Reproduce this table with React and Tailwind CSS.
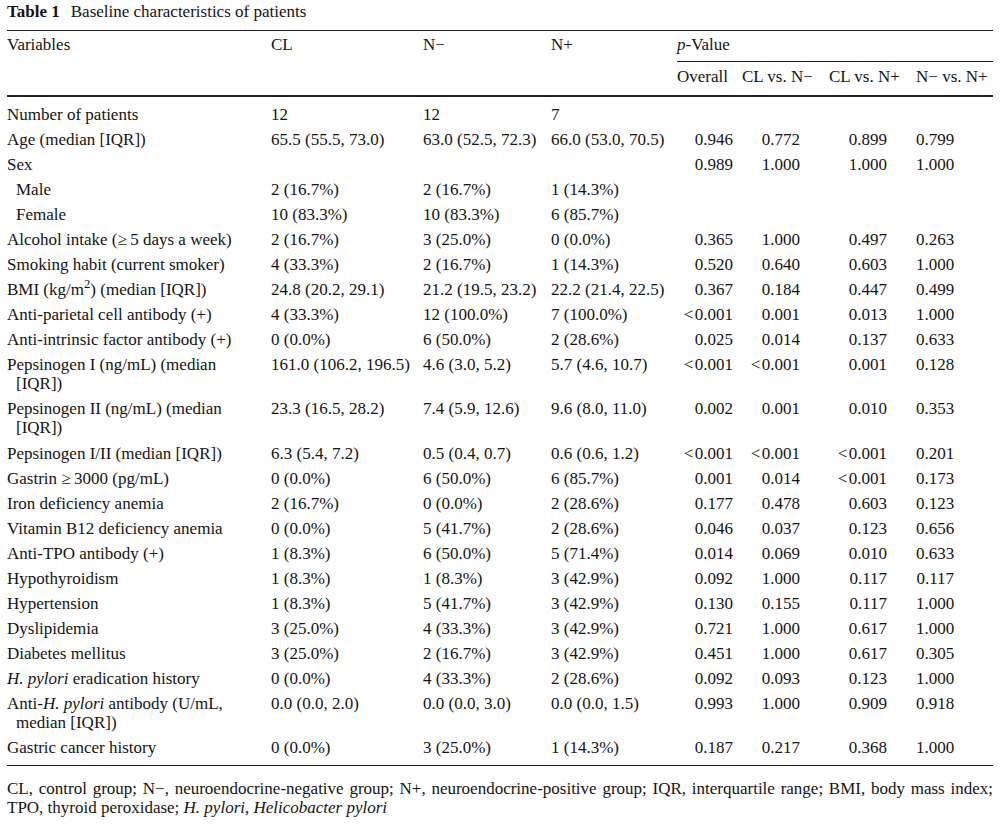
import React from 'react';

const M = '\u2212';
const LT = '<\u200A';

// label, CL, N-, N+, overall, CL vs N-, CL vs N+, N- vs N+
const rows = [
  { label: 'Number of patients', v: ['12', '12', '7'], p: [] },
  { label: 'Age (median [IQR])', v: ['65.5 (55.5, 73.0)', '63.0 (52.5, 72.3)', '66.0 (53.0, 70.5)'], p: ['0.946', '0.772', '0.899', '0.799'] },
  { label: 'Sex', v: ['', '', ''], p: ['0.989', '1.000', '1.000', '1.000'] },
  { label: 'Male', sub: true, v: ['2 (16.7%)', '2 (16.7%)', '1 (14.3%)'], p: [] },
  { label: 'Female', sub: true, v: ['10 (83.3%)', '10 (83.3%)', '6 (85.7%)'], p: [] },
  { label: 'Alcohol intake (\u2265\u20095 days a week)', v: ['2 (16.7%)', '3 (25.0%)', '0 (0.0%)'], p: ['0.365', '1.000', '0.497', '0.263'] },
  { label: 'Smoking habit (current smoker)', v: ['4 (33.3%)', '2 (16.7%)', '1 (14.3%)'], p: ['0.520', '0.640', '0.603', '1.000'] },
  { label: <>BMI (kg/m<sup>2</sup>) (median [IQR])</>, v: ['24.8 (20.2, 29.1)', '21.2 (19.5, 23.2)', '22.2 (21.4, 22.5)'], p: ['0.367', '0.184', '0.447', '0.499'] },
  { label: 'Anti-parietal cell antibody (+)', v: ['4 (33.3%)', '12 (100.0%)', '7 (100.0%)'], p: [LT + '0.001', '0.001', '0.013', '1.000'] },
  { label: 'Anti-intrinsic factor antibody (+)', v: ['0 (0.0%)', '6 (50.0%)', '2 (28.6%)'], p: ['0.025', '0.014', '0.137', '0.633'] },
  { label: 'Pepsinogen I (ng/mL) (median [IQR])', two: true, v: ['161.0 (106.2, 196.5)', '4.6 (3.0, 5.2)', '5.7 (4.6, 10.7)'], p: [LT + '0.001', LT + '0.001', '0.001', '0.128'] },
  { label: 'Pepsinogen II (ng/mL) (median [IQR])', two: true, v: ['23.3 (16.5, 28.2)', '7.4 (5.9, 12.6)', '9.6 (8.0, 11.0)'], p: ['0.002', '0.001', '0.010', '0.353'] },
  { label: 'Pepsinogen I/II (median [IQR])', v: ['6.3 (5.4, 7.2)', '0.5 (0.4, 0.7)', '0.6 (0.6, 1.2)'], p: [LT + '0.001', LT + '0.001', LT + '0.001', '0.201'] },
  { label: 'Gastrin \u2265\u20093000 (pg/mL)', v: ['0 (0.0%)', '6 (50.0%)', '6 (85.7%)'], p: ['0.001', '0.014', LT + '0.001', '0.173'] },
  { label: 'Iron deficiency anemia', v: ['2 (16.7%)', '0 (0.0%)', '2 (28.6%)'], p: ['0.177', '0.478', '0.603', '0.123'] },
  { label: 'Vitamin B12 deficiency anemia', v: ['0 (0.0%)', '5 (41.7%)', '2 (28.6%)'], p: ['0.046', '0.037', '0.123', '0.656'] },
  { label: 'Anti-TPO antibody (+)', v: ['1 (8.3%)', '6 (50.0%)', '5 (71.4%)'], p: ['0.014', '0.069', '0.010', '0.633'] },
  { label: 'Hypothyroidism', v: ['1 (8.3%)', '1 (8.3%)', '3 (42.9%)'], p: ['0.092', '1.000', '0.117', '0.117'] },
  { label: 'Hypertension', v: ['1 (8.3%)', '5 (41.7%)', '3 (42.9%)'], p: ['0.130', '0.155', '0.117', '1.000'] },
  { label: 'Dyslipidemia', v: ['3 (25.0%)', '4 (33.3%)', '3 (42.9%)'], p: ['0.721', '1.000', '0.617', '1.000'] },
  { label: 'Diabetes mellitus', v: ['3 (25.0%)', '2 (16.7%)', '3 (42.9%)'], p: ['0.451', '1.000', '0.617', '0.305'] },
  { label: <><i>H. pylori</i> eradication history</>, v: ['0 (0.0%)', '4 (33.3%)', '2 (28.6%)'], p: ['0.092', '0.093', '0.123', '1.000'] },
  { label: <>Anti-<i>H. pylori</i> antibody (U/mL, median [IQR])</>, two: true, v: ['0.0 (0.0, 2.0)', '0.0 (0.0, 3.0)', '0.0 (0.0, 1.5)'], p: ['0.993', '1.000', '0.909', '0.918'] },
  { label: 'Gastric cancer history', v: ['0 (0.0%)', '3 (25.0%)', '1 (14.3%)'], p: ['0.187', '0.217', '0.368', '1.000'] },
];

const pPad = ['pr-[9px]', 'pr-[29px]', 'pr-[29px]', 'pr-[39px]'];

function Row({ row, first, last }) {
  let pad = 'pt-[3px] pb-[3px]';
  if (first) pad = 'pt-[7.5px] pb-[3px]';
  if (row.two) pad = 'pt-[3px] pb-[3.5px]';
  if (last) pad = 'pt-[3px] pb-[7.5px] border-b border-[#222]';
  const p = row.p.length ? row.p : ['', '', '', ''];
  return (
    <tr className="align-top">
      <td className={`${pad} pr-[14px]`}>
        {row.sub ? (
          <div className="pl-[9px]">{row.label}</div>
        ) : (
          <div className="pl-[9px] -indent-[9px]">{row.label}</div>
        )}
      </td>
      {row.v.map((v, i) => (
        <td key={i} className={`${pad} whitespace-nowrap`}>{v}</td>
      ))}
      {p.map((v, i) => (
        <td key={'p' + i} className={`${pad} ${pPad[i]} text-right whitespace-nowrap`}>{v}</td>
      ))}
    </tr>
  );
}

export default function App() {
  return (
    <div className="w-[1001px] h-[824px] bg-white text-[#141414] text-[17px] leading-[19px] font-['Liberation_Serif','Times_New_Roman',serif]">
      <div className="px-[7px]">
        <div className="pt-[2px] pb-[9px]">
          <span className="font-bold">Table 1</span>
          <span className="ml-[11px]">Baseline characteristics of patients</span>
        </div>

        <table className="table-fixed w-[986px] border-separate border-spacing-0">
          <colgroup>
            <col className="w-[264px]" />
            <col className="w-[152px]" />
            <col className="w-[128px]" />
            <col className="w-[126px]" />
            <col className="w-[65px]" />
            <col className="w-[87px]" />
            <col className="w-[87px]" />
            <col className="w-[77px]" />
          </colgroup>
          <thead>
            <tr className="text-left align-top">
              <th className="font-normal border-t border-[#222] pt-[3.5px] pb-[8px]">Variables</th>
              <th className="font-normal border-t border-[#222] pt-[3.5px] pb-[8px]">CL</th>
              <th className="font-normal border-t border-[#222] pt-[3.5px] pb-[8px]">N{M}</th>
              <th className="font-normal border-t border-[#222] pt-[3.5px] pb-[8px]">N+</th>
              <th colSpan={4} className="font-normal border-t border-b border-[#222] pt-[3.5px] pb-[7.5px]">
                <i>p</i>-Value
              </th>
            </tr>
            <tr className="text-left align-top">
              <th className="border-b-2 border-[#222]"></th>
              <th className="border-b-2 border-[#222]"></th>
              <th className="border-b-2 border-[#222]"></th>
              <th className="border-b-2 border-[#222]"></th>
              <th className="font-normal whitespace-nowrap border-b-2 border-[#222] pt-[5px] pb-[9px]">Overall</th>
              <th className="font-normal whitespace-nowrap border-b-2 border-[#222] pt-[5px] pb-[9px]">CL vs. N{M}</th>
              <th className="font-normal whitespace-nowrap border-b-2 border-[#222] pt-[5px] pb-[9px]">CL vs. N+</th>
              <th className="font-normal whitespace-nowrap border-b-2 border-[#222] pt-[5px] pb-[9px]">N{M} vs. N+</th>
            </tr>
          </thead>
          <tbody>
            {rows.map((r, i) => (
              <Row key={i} row={r} first={i === 0} last={i === rows.length - 1} />
            ))}
          </tbody>
        </table>

        <p className="mt-[13px] w-[986px] text-justify">
          CL, control group; N{M}, neuroendocrine-negative group; N+, neuroendocrine-positive group; IQR, interquartile range; BMI, body mass index; TPO, thyroid peroxidase; <i>H. pylori</i>, <i>Helicobacter pylori</i>
        </p>
      </div>
    </div>
  );
}
